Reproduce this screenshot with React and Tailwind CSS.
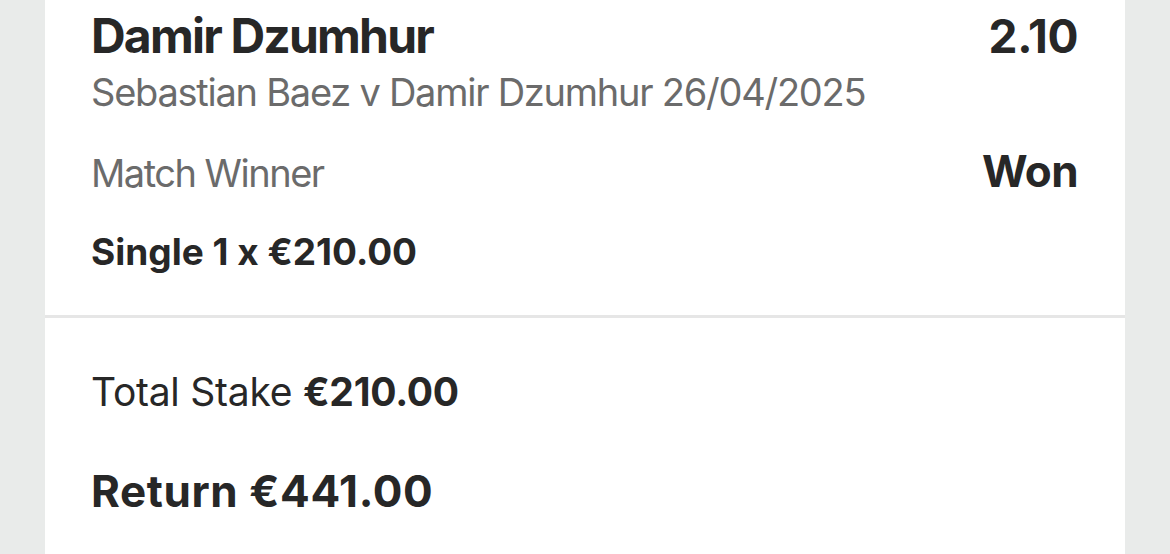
import React from 'react';

export default function App() {
    return (
        <div className="min-h-screen bg-[#e9ebea] text-[#272727]" style={{ fontFamily: 'Inter, "Noto Sans", sans-serif' }}>
            <div className="ml-[45px] w-[1080px] min-h-[554px] bg-white">
                <div className="pl-[46px] pr-[47px] pt-[12px] pb-[45px]">
                    <div className="flex items-baseline justify-between">
                        <h2 className="text-[48px] leading-none font-bold tracking-[-1.8px]">Damir Dzumhur</h2>
                        <span className="text-[46px] leading-none font-bold tracking-[-0.4px]">2.10</span>
                    </div>
                    <p className="mt-[13px] text-[38px] leading-none text-[#6b6b6b] tracking-[-1.25px]">
                        Sebastian Baez v Damir Dzumhur 26/04/2025
                    </p>
                    <div className="mt-[38px] flex items-baseline justify-between">
                        <span className="text-[38px] leading-none text-[#6b6b6b] tracking-[-1.5px]">Match Winner</span>
                        <span className="text-[44px] leading-none font-bold tracking-[-0.6px]">Won</span>
                    </div>
                    <p className="mt-[40px] text-[37px] leading-none font-bold">Single 1 x €210.00</p>
                </div>
                <div className="h-[3px] bg-[#e6e6e6]" />
                <div className="pl-[46px] pr-[47px]">
                    <p className="mt-[54px] text-[39px] leading-none tracking-[-0.25px]">
                        Total Stake <span className="font-bold">€210.00</span>
                    </p>
                    <p className="mt-[58px] text-[44px] leading-none font-bold tracking-[0.6px]">Return €441.00</p>
                </div>
            </div>
        </div>
    );
}
